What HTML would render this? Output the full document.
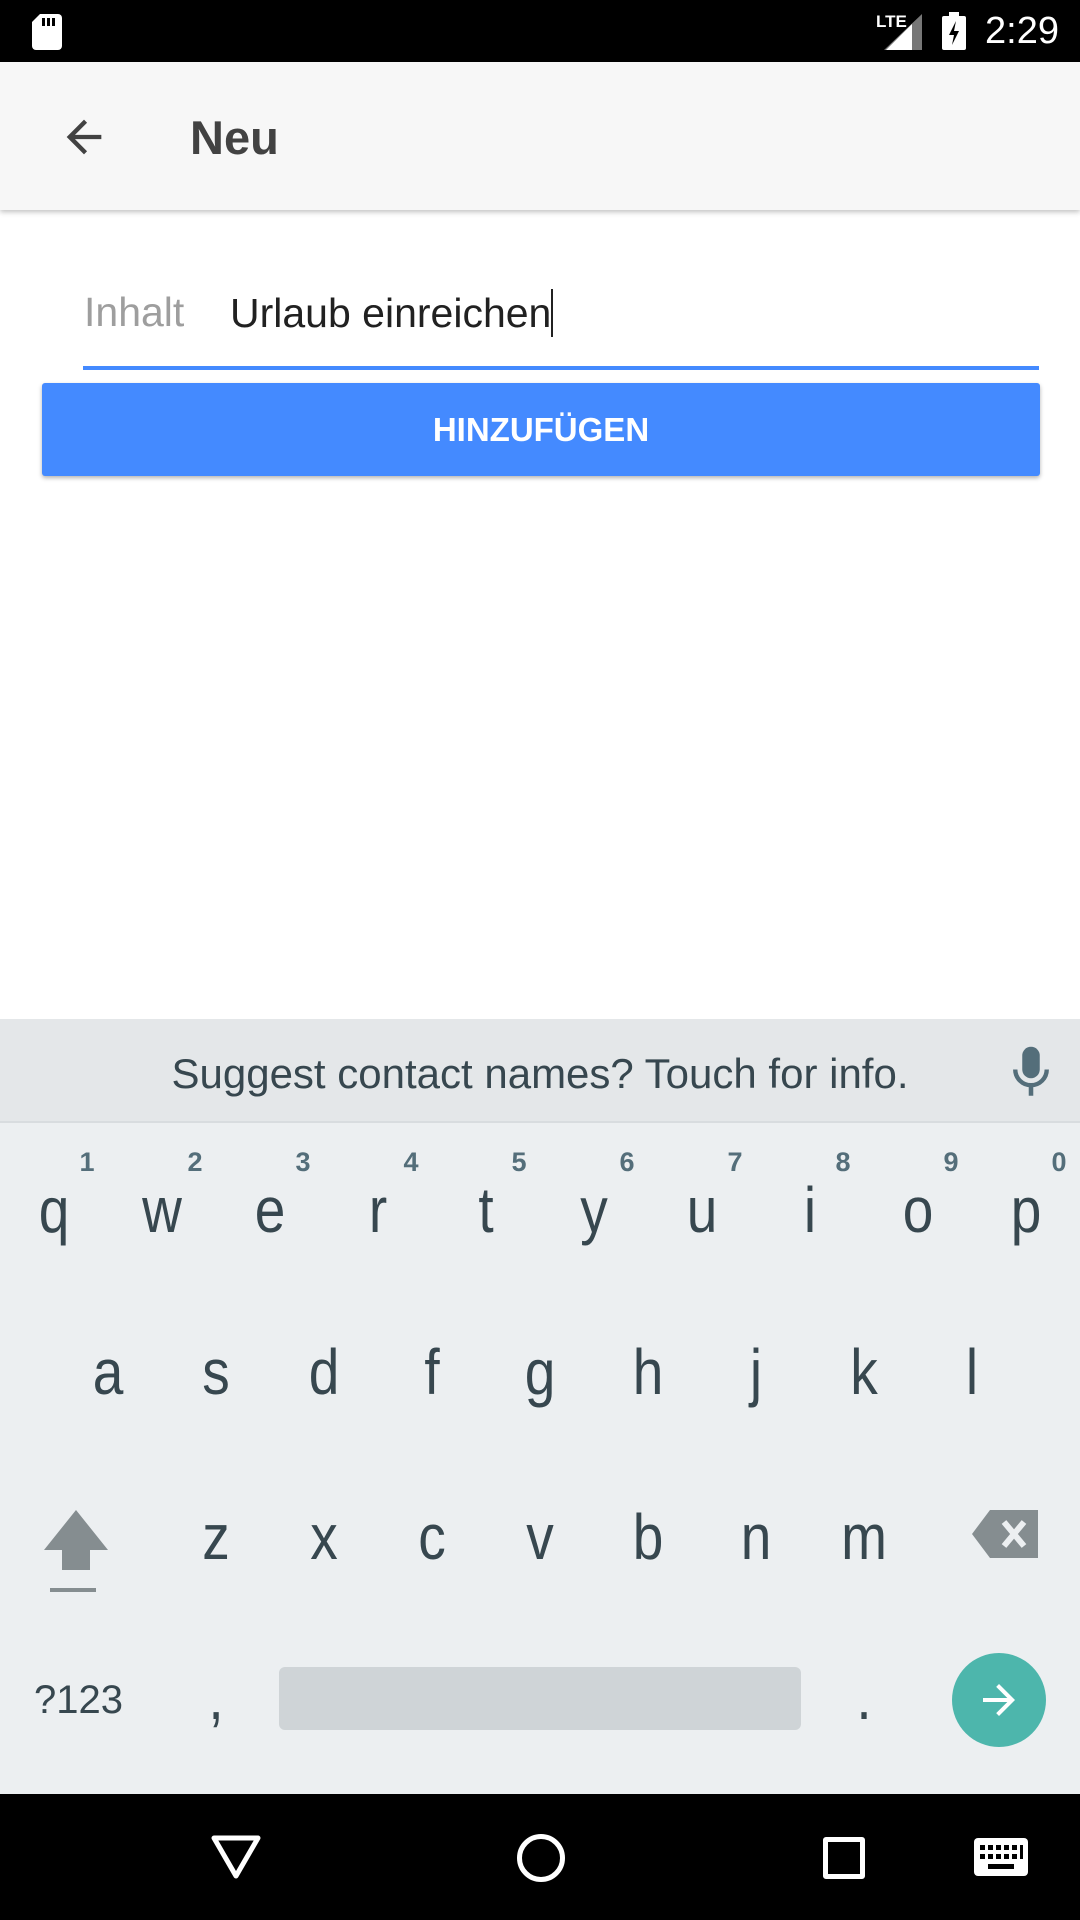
<!DOCTYPE html>
<html><head><meta charset="utf-8"><style>
*{margin:0;padding:0;box-sizing:border-box}
body{width:1080px;height:1920px;position:relative;background:#fff;font-family:"Liberation Sans",sans-serif;overflow:hidden}
.abs{position:absolute}
.k{position:absolute;width:108px;text-align:center;color:#37474f;font-size:64px;line-height:1;transform:scaleX(.86)}
.n{position:absolute;width:40px;text-align:center;color:#546e7a;font-size:27px;font-weight:bold}
</style></head><body>
<div class="abs" style="left:0;top:0;width:1080px;height:62px;background:#000"></div>
<svg class="abs" style="left:32px;top:14px" width="30" height="36" viewBox="0 0 30 36"><path d="M8 0h18a4 4 0 0 1 4 4v28a4 4 0 0 1-4 4H4a4 4 0 0 1-4-4V8z" fill="#fff"/><rect x="10" y="4" width="3" height="8" fill="#000"/><rect x="15" y="4" width="3" height="8" fill="#000"/><rect x="20" y="4" width="3" height="8" fill="#000"/></svg>
<div class="abs" style="left:876px;top:12px;color:#fff;font-size:17px;font-weight:bold">LTE</div>
<svg class="abs" style="left:884px;top:14px" width="38" height="36"><polygon points="38,0 38,36 0,36" fill="#777"/><polygon points="28,10 28,36 2,36" fill="#fff"/></svg>
<svg class="abs" style="left:942px;top:12px" width="24" height="38"><rect x="0" y="4" width="24" height="34" rx="2" fill="#fff"/><rect x="7" y="0" width="10" height="5" fill="#fff"/><path d="M14 9 L7 23 H12 L10 33 L17 19 H12Z" fill="#000"/></svg>
<div class="abs" style="left:985px;top:10px;color:#fff;font-size:38px">2:29</div>
<div class="abs" style="left:0;top:62px;width:1080px;height:148px;background:#f7f7f7;box-shadow:0 2px 5px rgba(0,0,0,.25)"></div>
<svg class="abs" style="left:58px;top:111px" width="52" height="52" viewBox="0 0 24 24"><path d="M20 11H7.83l5.59-5.59L12 4l-8 8 8 8 1.41-1.41L7.83 13H20v-2z" fill="#424242"/></svg>
<div class="abs" style="left:190px;top:110px;font-size:47px;font-weight:bold;color:#424242">Neu</div>
<div class="abs" style="left:84px;top:289px;font-size:41px;color:#9e9e9e">Inhalt</div>
<div class="abs" style="left:230px;top:289px;font-size:41px;color:#212121">Urlaub einreichen<span style="display:inline-block;width:2px;height:48px;background:#212121;vertical-align:-10px"></span></div>
<div class="abs" style="left:83px;top:366px;width:956px;height:4px;background:#448aff"></div>
<div class="abs" style="left:42px;top:383px;width:998px;height:93px;background:#448aff;border-radius:3px;box-shadow:0 2px 4px rgba(0,0,0,.3);color:#fff;font-size:33px;font-weight:bold;text-align:center;line-height:93px">HINZUFÜGEN</div>
<div class="abs" style="left:0;top:1019px;width:1080px;height:775px;background:#eceff1"></div>
<div class="abs" style="left:0;top:1019px;width:1080px;height:104px;background:#e4e7e9;border-bottom:2px solid #d8dcdf"></div>
<div class="abs" style="left:0;top:1050px;width:1080px;text-align:center;font-size:42px;color:#37474f">Suggest contact names? Touch for info.</div>
<svg class="abs" style="left:1010px;top:1046px" width="42" height="54" viewBox="0 0 24 30"><rect x="7" y="0" width="10" height="18" rx="5" fill="#546e7a"/><path d="M3 13a9 9 0 0 0 18 0" stroke="#546e7a" stroke-width="2.5" fill="none"/><rect x="10.7" y="21" width="2.6" height="7" fill="#546e7a"/></svg>
<div class="n" style="left:67px;top:1147px">1</div><div class="n" style="left:175px;top:1147px">2</div><div class="n" style="left:283px;top:1147px">3</div><div class="n" style="left:391px;top:1147px">4</div><div class="n" style="left:499px;top:1147px">5</div><div class="n" style="left:607px;top:1147px">6</div><div class="n" style="left:715px;top:1147px">7</div><div class="n" style="left:823px;top:1147px">8</div><div class="n" style="left:931px;top:1147px">9</div><div class="n" style="left:1039px;top:1147px">0</div>
<div class="k" style="left:0;top:1178px">q</div><div class="k" style="left:108px;top:1178px">w</div><div class="k" style="left:216px;top:1178px">e</div><div class="k" style="left:324px;top:1178px">r</div><div class="k" style="left:432px;top:1178px">t</div><div class="k" style="left:540px;top:1178px">y</div><div class="k" style="left:648px;top:1178px">u</div><div class="k" style="left:756px;top:1178px">i</div><div class="k" style="left:864px;top:1178px">o</div><div class="k" style="left:972px;top:1178px">p</div>
<div class="k" style="left:54px;top:1340px">a</div><div class="k" style="left:162px;top:1340px">s</div><div class="k" style="left:270px;top:1340px">d</div><div class="k" style="left:378px;top:1340px">f</div><div class="k" style="left:486px;top:1340px">g</div><div class="k" style="left:594px;top:1340px">h</div><div class="k" style="left:702px;top:1340px">j</div><div class="k" style="left:810px;top:1340px">k</div><div class="k" style="left:918px;top:1340px">l</div>
<svg class="abs" style="left:44px;top:1510px" width="64" height="84"><polygon points="32,0 64,40 46,40 46,48 18,48 18,40 0,40" fill="#858d90"/><rect x="18" y="38" width="28" height="22" fill="#858d90"/><rect x="6" y="78" width="46" height="4" fill="#858d90"/></svg>
<div class="k" style="left:162px;top:1505px">z</div><div class="k" style="left:270px;top:1505px">x</div><div class="k" style="left:378px;top:1505px">c</div><div class="k" style="left:486px;top:1505px">v</div><div class="k" style="left:594px;top:1505px">b</div><div class="k" style="left:702px;top:1505px">n</div><div class="k" style="left:810px;top:1505px">m</div>
<svg class="abs" style="left:972px;top:1510px" width="66" height="48"><path d="M18 0H66V48H18L0 24Z" fill="#858d90"/><path d="M32 12L52 36M52 12L32 36" stroke="#eceff1" stroke-width="6"/></svg>
<div class="abs" style="left:34px;top:1678px;font-size:40px;color:#37474f">?123</div>
<div class="k" style="left:162px;top:1665px">,</div>
<div class="abs" style="left:279px;top:1667px;width:522px;height:63px;background:#cfd4d7;border-radius:6px"></div>
<div class="k" style="left:810px;top:1665px">.</div>
<div class="abs" style="left:952px;top:1653px;width:94px;height:94px;border-radius:50%;background:#4db6ac"></div>
<svg class="abs" style="left:975px;top:1676px" width="48" height="48" viewBox="0 0 24 24"><path d="M12 4l-1.41 1.41L16.170 11H4v2h12.17l-5.58 5.59L12 20l8-8z" fill="#fff"/></svg>
<div class="abs" style="left:0;top:1794px;width:1080px;height:126px;background:#000"></div>
<svg class="abs" style="left:210px;top:1834px" width="52" height="46"><polygon points="4,4 48,4 26,42" fill="none" stroke="#fff" stroke-width="5" stroke-linejoin="round"/></svg>
<div class="abs" style="left:517px;top:1834px;width:48px;height:48px;border:5px solid #fff;border-radius:50%"></div>
<div class="abs" style="left:823px;top:1837px;width:42px;height:42px;border:5px solid #fff;border-radius:3px"></div>
<svg class="abs" style="left:974px;top:1838px" width="54" height="38"><rect width="54" height="38" rx="4" fill="#fff"/><g fill="#000"><rect x="6" y="7" width="5" height="5"/><rect x="14" y="7" width="5" height="5"/><rect x="22" y="7" width="5" height="5"/><rect x="30" y="7" width="5" height="5"/><rect x="38" y="7" width="5" height="5"/><rect x="6" y="16" width="5" height="5"/><rect x="14" y="16" width="5" height="5"/><rect x="22" y="16" width="5" height="5"/><rect x="30" y="16" width="5" height="5"/><rect x="38" y="16" width="5" height="5"/><rect x="46" y="7" width="3" height="14"/><rect x="14" y="26" width="26" height="5"/></g></svg>
</body></html>
